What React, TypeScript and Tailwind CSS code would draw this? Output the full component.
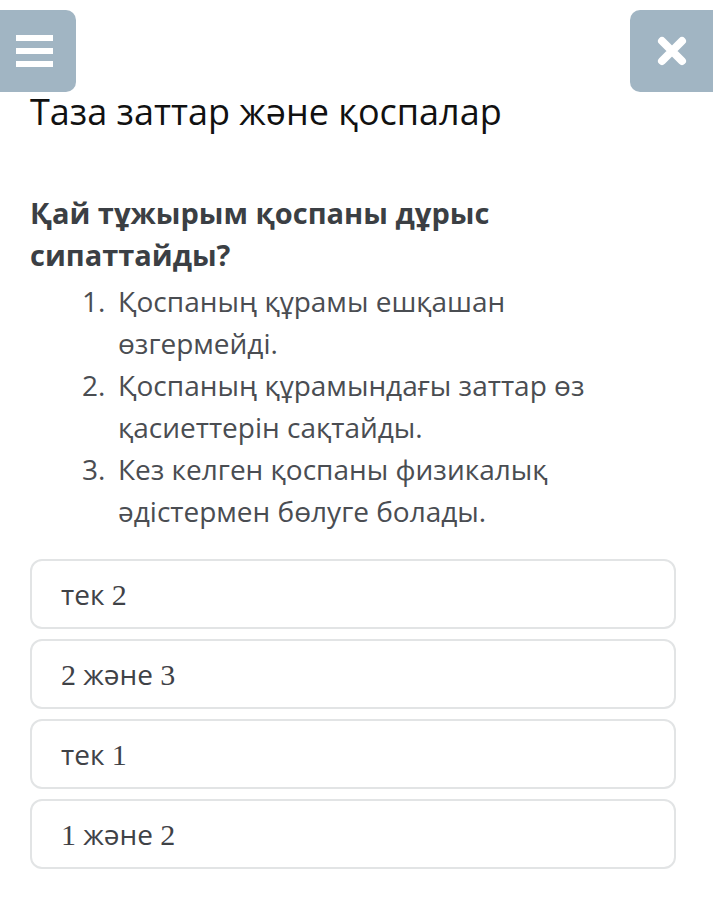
import React from 'react';

const items = [
  'Қоспаның құрамы ешқашан өзгермейді.',
  'Қоспаның құрамындағы заттар өз қасиеттерін сақтайды.',
  'Кез келген қоспаны физикалық әдістермен бөлуге болады.',
];

const options = ['тек 2', '2 және 3', 'тек 1', '1 және 2'];

function Answer({ text }: { text: string }) {
  // digits in the answers are set in a serif face
  const parts = text.split(/(\d)/);
  return (
    <span>
      {parts.map((p, i) =>
        /\d/.test(p) ? (
          <span key={i} className="font-['Liberation_Serif',serif] text-[30px]">
            {p}
          </span>
        ) : (
          <React.Fragment key={i}>{p}</React.Fragment>
        ),
      )}
    </span>
  );
}

export default function App() {
  return (
    <div className="min-h-[915px] w-[713px] overflow-hidden bg-white font-['Open_Sans',sans-serif]">
      <div className="flex items-start justify-between pt-[10px]">
        <button className="flex h-[82px] w-[76px] flex-col items-start justify-center gap-[7px] rounded-r-[10px] bg-[#a1b5c3] pl-[16px]">
          <span className="h-[6px] w-[37px] bg-white" />
          <span className="h-[6px] w-[37px] bg-white" />
          <span className="h-[6px] w-[37px] bg-white" />
        </button>
        <button className="flex h-[82px] w-[83px] items-center justify-start rounded-l-[10px] bg-[#a1b5c3] pl-[27px]">
          <svg width="30" height="30" viewBox="0 0 30 30">
            <path d="M5 5 L25 25 M25 5 L5 25" stroke="white" strokeWidth="8" strokeLinecap="round" />
          </svg>
        </button>
      </div>

      <h1 className="-mt-[2px] px-[30px] text-[36px] leading-[44px] text-[#111]">Таза заттар және қоспалар</h1>

      <div className="w-[615px]">
        <p className="mt-[58px] pl-[30px] text-[29px] font-bold leading-[42px] text-[#3b3f44]">
          Қай тұжырым қоспаны дұрыс сипаттайды?
        </p>

        <ol className="mt-[4px] pl-[82px] text-[28px] leading-[42px] text-[#4a4d52]">
          {items.map((t, i) => (
            <li key={i} className="flex">
              <span className="w-[36px] shrink-0">{i + 1}.</span>
              <span>{t}</span>
            </li>
          ))}
        </ol>
      </div>

      <div className="mt-[27px] flex flex-col gap-[10px] pl-[30px] pr-[37px]">
        {options.map((o, i) => (
          <div
            key={i}
            className="flex h-[70px] items-center rounded-[12px] border-2 border-[#e2e4e5] px-[29px] text-[28px] text-[#3f4247]"
          >
            <Answer text={o} />
          </div>
        ))}
      </div>
    </div>
  );
}
